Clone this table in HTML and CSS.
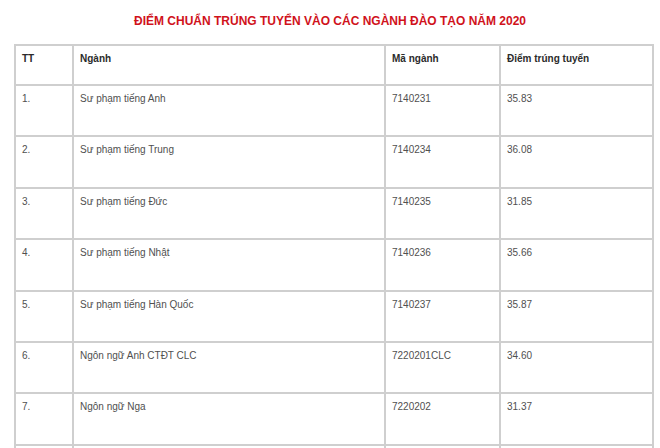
FILE: index.html
```html
<!DOCTYPE html>
<html lang="vi">
<head>
<meta charset="utf-8">
<title>Điểm chuẩn</title>
<link rel="stylesheet" href="styles.css">
</head>
<body>
<div class="page">
  <h1 class="title">ĐIỂM CHUẨN TRÚNG TUYỂN VÀO CÁC NGÀNH ĐÀO TẠO NĂM 2020</h1>
  <table class="scores">
    <colgroup>
      <col class="c-tt"><col class="c-name"><col class="c-code"><col class="c-score">
    </colgroup>
    <thead>
      <tr class="head">
        <th>TT</th><th>Ngành</th><th>Mã ngành</th><th>Điểm trúng tuyển</th>
      </tr>
    </thead>
    <tbody>
      <tr class="row"><td>1.</td><td>Sư phạm tiếng Anh</td><td>7140231</td><td>35.83</td></tr>
      <tr class="row"><td>2.</td><td>Sư phạm tiếng Trung</td><td>7140234</td><td>36.08</td></tr>
      <tr class="row"><td>3.</td><td>Sư phạm tiếng Đức</td><td>7140235</td><td>31.85</td></tr>
      <tr class="row"><td>4.</td><td>Sư phạm tiếng Nhật</td><td>7140236</td><td>35.66</td></tr>
      <tr class="row"><td>5.</td><td>Sư phạm tiếng Hàn Quốc</td><td>7140237</td><td>35.87</td></tr>
      <tr class="row"><td>6.</td><td>Ngôn ngữ Anh CTĐT CLC</td><td>7220201CLC</td><td>34.60</td></tr>
      <tr class="row"><td>7.</td><td>Ngôn ngữ Nga</td><td>7220202</td><td>31.37</td></tr>
      <tr class="row"><td></td><td></td><td></td><td></td></tr>
    </tbody>
  </table>
</div>
</body>
</html>
```

FILE: styles.css
```css
html, body {
  margin: 0;
  padding: 0;
  background: #ffffff;
}

body {
  font-family: "Liberation Sans", Arial, sans-serif;
}

.page {
  width: 660px;
  height: 448px;
  overflow: hidden;
}

.title {
  margin: 0;
  padding-top: 14px;
  height: 30px;
  line-height: 14px;
  font-size: 12px;
  font-weight: bold;
  color: #d0121b;
  text-align: center;
}

.scores {
  margin-left: 14px;
  width: 640px;
  table-layout: fixed;
  border-collapse: separate;
  border-spacing: 0;
  border-top: 2px solid #cfcfcf;
  border-left: 2px solid #cfcfcf;
  font-size: 10px;
  line-height: 14px;
}

.c-tt { width: 58px; }
.c-name { width: 312px; }
.c-code { width: 115px; }
.c-score { width: 153px; }

.scores th,
.scores td {
  box-sizing: border-box;
  border-right: 2px solid #cfcfcf;
  border-bottom: 2px solid #cfcfcf;
  padding: 6px 6px 4px;
  vertical-align: top;
  text-align: left;
}

.scores th {
  font-weight: bold;
  color: #2b2b2b;
}

.scores td {
  color: #505050;
}

.head {
  height: 40px;
}

.row {
  height: 51.4px;
}
```
